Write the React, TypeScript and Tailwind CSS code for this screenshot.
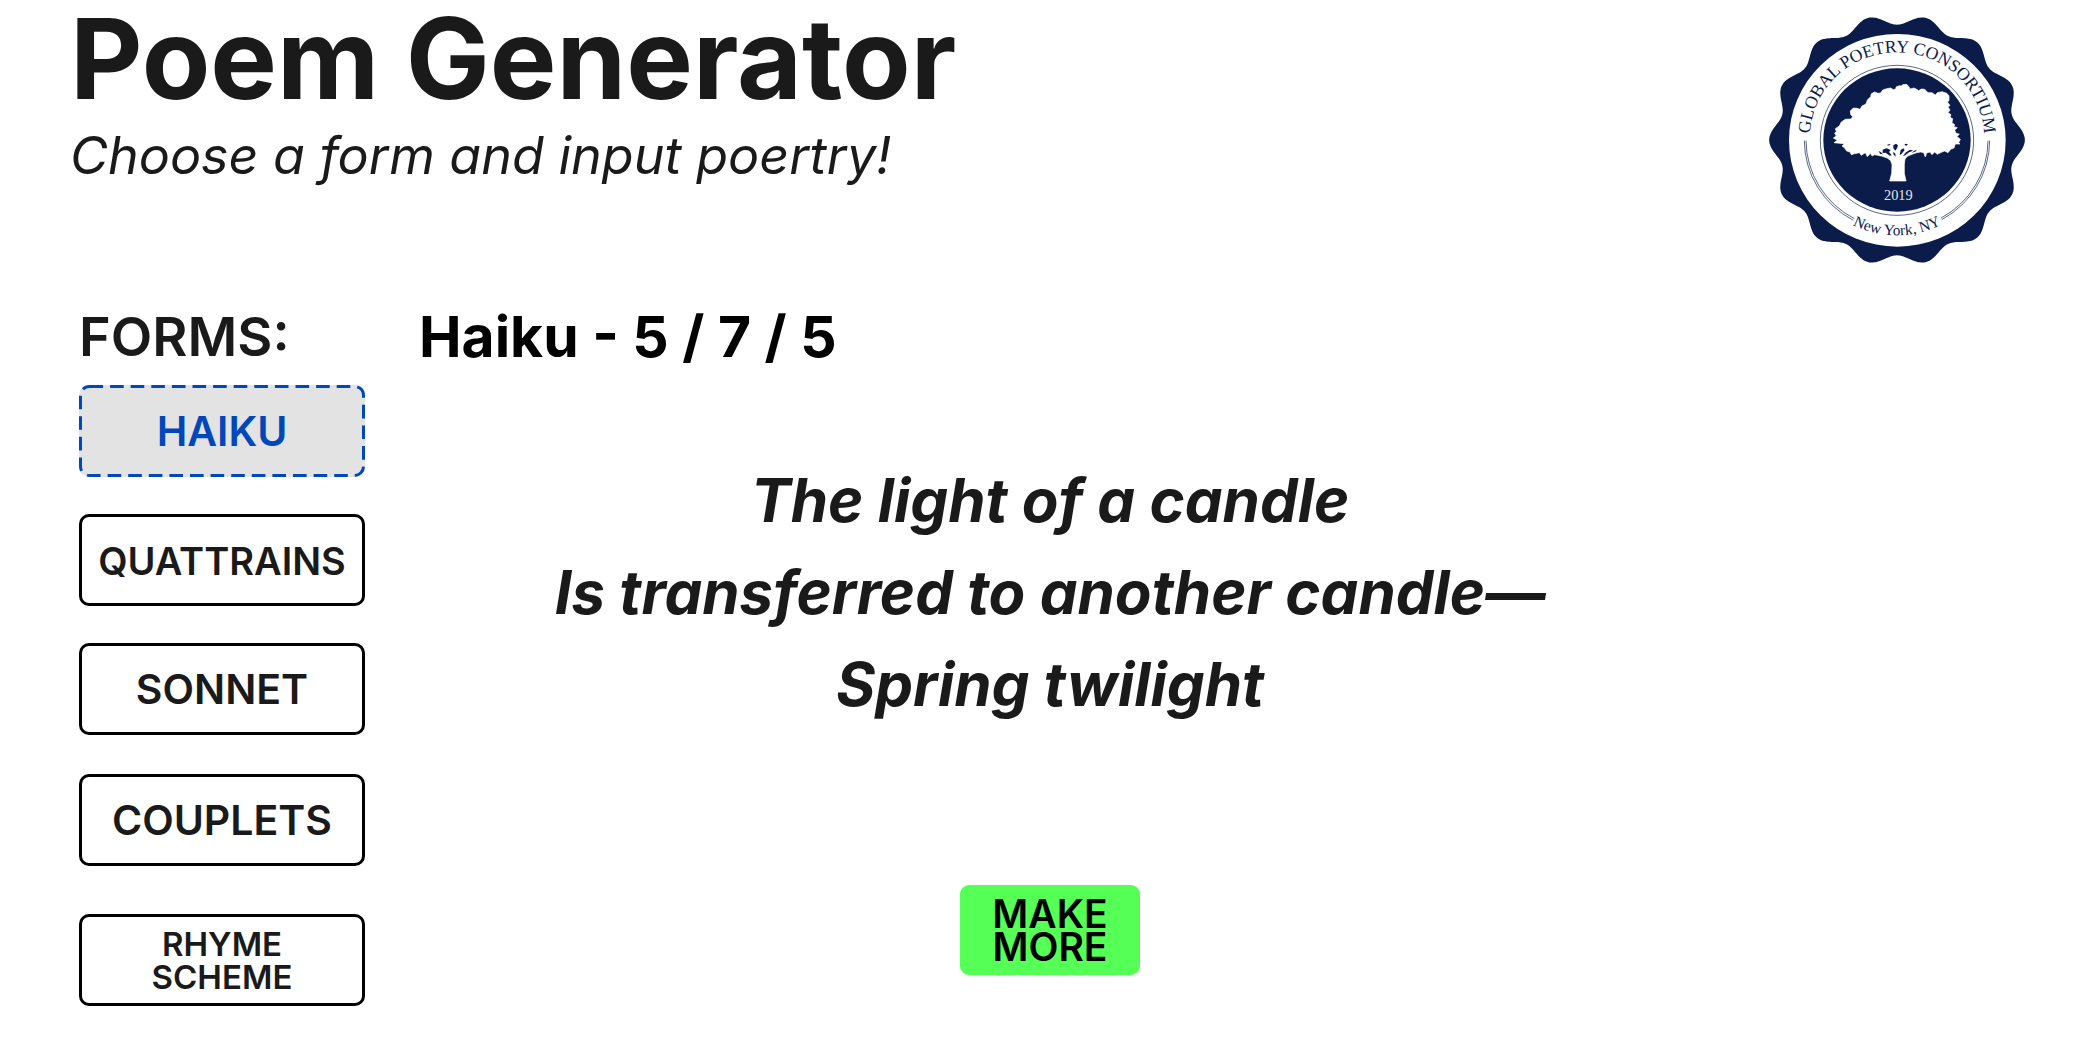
import React from "react";

const NAVY = "#0b1c4a";

function sealEdge(): string {
  const points: string[] = [];
  for (let i = 0; i < 560; i++) {
    const a = (i / 560) * Math.PI * 2;
    const r = 361 + 15 * Math.cos(14 * a);
    points.push(`${(441 + r * 1.02 * Math.cos(a)).toFixed(1)} ${(420 + r * Math.sin(a)).toFixed(1)}`);
  }
  return `M${points.join("L")}Z`;
}

const CROWN =
  "M250 414L259 408L254 400L259 394L256 386L268 378L274 366L286 358L303 357L308 350L302 344L301 333L310 324L322 325L330 328L336 318L348 312L352 300L362 290L364 281L374 276L384 280L392 279L398 270L410 266L422 264L430 269L438 266L438 261L448 257L454 258L458 254L470 253L478 262L480 267L492 264L500 268L506 272L514 267L524 268L534 278L546 278L556 285L562 278L576 275L590 280L597 287L597 302L592 306L600 316L594 321L600 330L594 338L603 344L600 352L608 356L606 368L614 374L612 380L622 383L614 390L618 400L628 402L621 410L631 418L626 428L630 432L616 432L612 444L602 448L594 458L584 453L576 456L568 460L562 463L554 456L546 464L540 456L530 459L526 471L521 458L512 456L500 458L486 463L472 469L465 477L463 494L463 520L468 543L419 543L425 520L426 494L422 482L412 474L394 468L374 464L366 468L362 460L352 470L346 458L334 466L328 458L314 461L304 464L300 456L290 453L284 444L276 438L283 431L268 430L252 428L262 421Z";

function Seal() {
  return (
    <svg viewBox="48 45 786 750" className="mt-[11px] h-[250px] w-[262px] shrink-0" role="img" aria-label="Global Poetry Consortium seal">
      <defs>
        <path id="seal-top" d="M180 412 A261 255 0 0 1 702 412" />
        <path id="seal-bottom" d="M150 420 A291 286 0 0 0 732 420" />
      </defs>
      <path d={sealEdge()} fill={NAVY} />
      <ellipse cx="442" cy="421" rx="325" ry="319" fill="#fff" />
      <ellipse cx="441" cy="421" rx="230" ry="225" fill="none" stroke={NAVY} strokeWidth="2" />
      <ellipse cx="441" cy="420" rx="221" ry="215" fill={NAVY} />
      <g fill="none" stroke={NAVY} strokeWidth="2">
        <path d="M163 422 A278 272 0 0 0 310 661" />
        <path d="M168 422 A273 267 0 0 0 313 656" />
        <path d="M719 422 A278 272 0 0 1 575 659" />
        <path d="M714 422 A273 267 0 0 1 573 654" />
      </g>
      <path d={CROWN} fill="#fff" stroke="#fff" strokeWidth="2" strokeLinejoin="round" />
      <path
        fill={NAVY}
        d="M398 449l12-4 12 5-5 6 8 10-6 1-12-9-9 1zM430 436l8-5 6 5-3 9-5 7-6-7zM452 450l8-5 4 5-9 11-6 5zM468 457l12-8 10 3-13 5-11 9-7 2zM430 455l6 6 1 9-7-7zM386 453l6 3 7 7-9-2zM492 453l8-4-2 5-13 5zM412 434l8-2 1 3-8 2zM466 431l8 2-5 4-6-2z"
      />
      <g className="font-['Liberation_Serif',serif]" fill={NAVY} textAnchor="middle">
        <text fontSize="53">
          <textPath href="#seal-top" startOffset="50%">GLOBAL POETRY CONSORTIUM</textPath>
        </text>
        <text fontSize="46">
          <textPath href="#seal-bottom" startOffset="50%">New York, NY</textPath>
        </text>
        <text x="445" y="600" fontSize="43" fill="#e4e5ec">2019</text>
      </g>
    </svg>
  );
}

const base =
  "relative flex h-[92px] w-full cursor-pointer items-center justify-center rounded-[10px] pt-0.5 text-center font-semibold";
const plain = "border-[3px] border-black bg-white text-[#1a1a1a]";

const FORMS = [
  { label: "HAIKU", look: "bg-[#e3e3e3] text-[#0047bb] text-[41px]", selected: true },
  { label: "QUATTRAINS", look: `${plain} mt-[37px] text-[38px]` },
  { label: "SONNET", look: `${plain} mt-[37px] text-[41px]` },
  { label: "COUPLETS", look: `${plain} mt-[39px] text-[41px]` },
  { label: "RHYME SCHEME", look: `${plain} mt-[48px] px-14 text-[33px] leading-[33px]` },
];

const POEM = ["The light of a candle", "Is transferred to another candle—", "Spring twilight"];

export default function App() {
  return (
    <div className="min-h-screen bg-white font-['Inter',sans-serif] text-[#1a1a1a]">
      <header className="flex items-start justify-between pt-1 pr-[72px] pl-[70px]">
        <div>
          <h1 className="text-[112px] leading-[108px] font-bold">Poem Generator</h1>
          <p className="mt-3.5 text-[52px] leading-[60px] italic">Choose a form and input poertry!</p>
        </div>
        <Seal />
      </header>

      <main className="mt-[42px] grid grid-cols-[286px_1fr_286px] gap-x-[54px] px-[79px]">
        <nav aria-labelledby="forms-heading">
          <h2 id="forms-heading" className="text-[54px] leading-[60px] font-semibold">FORMS:</h2>
          <div className="mt-[18px]">
            {FORMS.map((f) => (
              <button key={f.label} type="button" className={`${base} ${f.look}`}>
                {f.selected && (
                  <svg className="absolute inset-0 h-full w-full" aria-hidden="true">
                    <rect
                      x="1.5"
                      y="1.5"
                      width="283"
                      height="89"
                      rx="9"
                      fill="none"
                      stroke="#0047bb"
                      strokeWidth="3"
                      strokeDasharray="13.6 7"
                    />
                  </svg>
                )}
                {f.label}
              </button>
            ))}
          </div>
        </nav>

        <section className="flex flex-col items-center">
          <h2 className="self-start text-[57px] leading-[60px] font-bold text-black">Haiku - 5 / 7 / 5</h2>
          <blockquote className="mt-[87px] text-center text-[60px] leading-[92px] font-bold italic">
            {POEM.map((line) => (
              <p key={line} className="whitespace-nowrap">{line}</p>
            ))}
          </blockquote>
          <button
            type="button"
            className="mt-[155px] h-[90px] w-[180px] cursor-pointer rounded-[9px] bg-[#55ff55] px-4 text-[39px] leading-[33px] font-semibold text-black"
          >
            MAKE MORE
          </button>
        </section>
      </main>
    </div>
  );
}
